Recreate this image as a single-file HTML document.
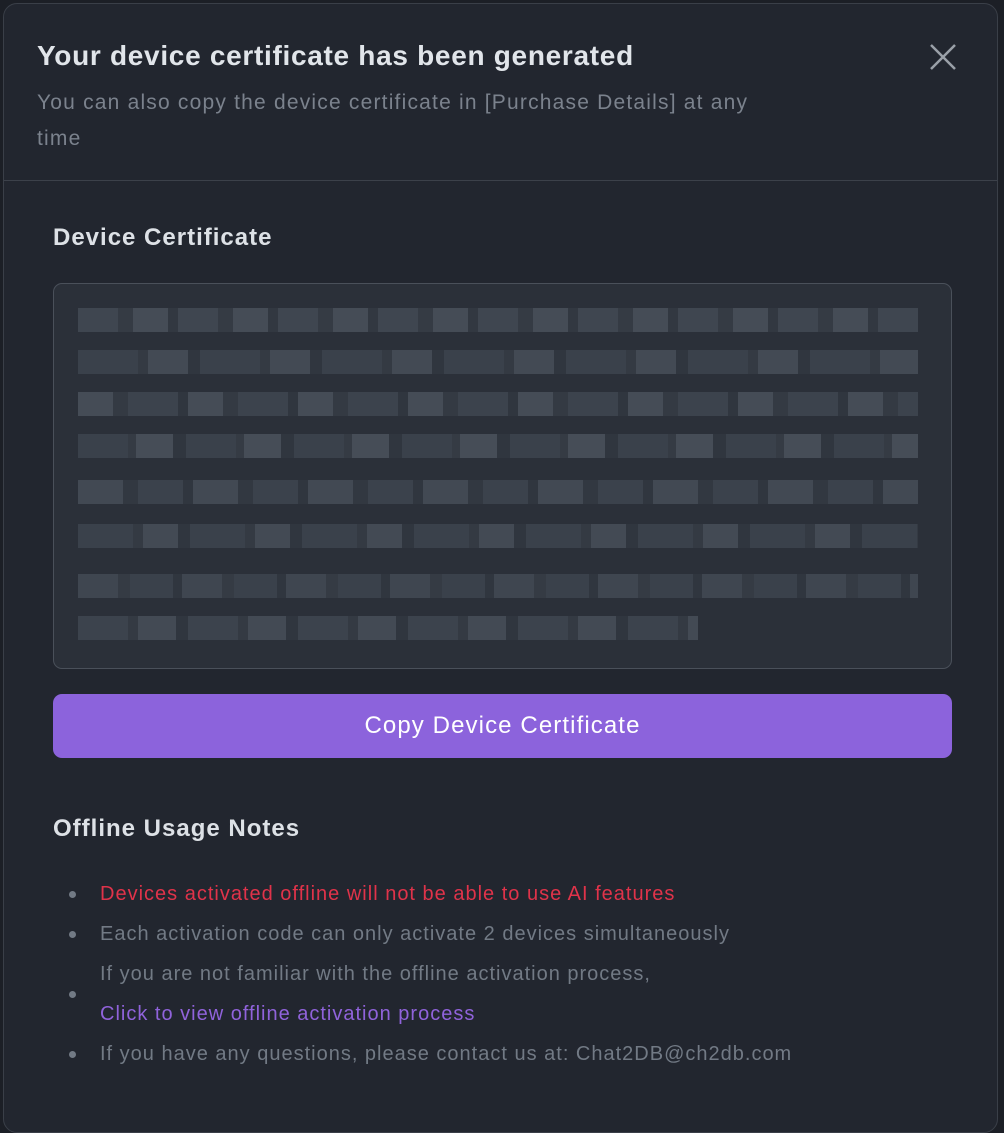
<!DOCTYPE html><html><head><style>
body{margin:0;width:1004px;height:1122px;background:#1c1f26;font-family:"Liberation Sans",sans-serif;overflow:hidden;position:relative}
.m{position:absolute;left:3px;top:3px;width:995px;height:1130px;background:#22262f;border:1px solid #3a3f48;border-radius:14px;box-sizing:border-box}
.t{position:absolute;left:33px;top:36px;font-size:28px;font-weight:600;color:#e1e5ea;letter-spacing:0.7px}
.s{position:absolute;left:33px;top:81px;width:740px;font-size:21px;line-height:36px;color:#7b828d;letter-spacing:1.2px}
.hr{position:absolute;left:0;right:0;top:176px;height:1px;background:#3c414a}
.h{position:absolute;left:49px;font-size:24px;font-weight:600;color:#dde1e6;letter-spacing:1px}
.box{position:absolute;left:49px;top:279px;width:899px;height:386px;background:#2b3039;border:1.5px solid #4a505a;border-radius:9px;box-sizing:border-box;overflow:hidden}
.row{position:absolute;left:24px;height:24px}
.btn{position:absolute;left:49px;top:690px;width:899px;height:64px;background:#8c63dc;border-radius:9px;color:#fff;font-size:24px;text-align:center;line-height:64px;letter-spacing:1.1px}
ul{position:absolute;left:48px;top:870px;margin:0;padding:0;list-style:none;font-size:20px;line-height:40px;color:#727a85;letter-spacing:1px}
li{position:relative;padding-left:48px}
li:before{content:"";position:absolute;left:17px;top:50%;width:7px;height:7px;margin-top:-3px;border-radius:50%;background:#727a85}
.x{position:absolute;left:924px;top:38px}
</style></head><body>
<div class="m">
<div class="t">Your device certificate has been generated</div>
<div class="s">You can also copy the device certificate in [Purchase Details] at any time</div>
<svg class="x" width="30" height="30" viewBox="0 0 30 30"><path d="M3 3L27 27M27 3L3 27" stroke="#9aa0a8" stroke-width="2.5"/></svg>
<div class="hr"></div>
<div class="h" style="top:220px">Device Certificate</div>
<div class="box">
<div class="row" style="top:24px;width:840px;background:repeating-linear-gradient(90deg,#3f4650 0 40px,#353b44 40px 55px,#454c56 55px 90px,#323841 90px 100px)"></div>
<div class="row" style="top:66px;width:840px;background:repeating-linear-gradient(90deg,#3a414b 0 60px,#343a43 60px 70px,#434a54 70px 110px,#30363f 110px 122px)"></div>
<div class="row" style="top:108px;width:840px;background:repeating-linear-gradient(90deg,#454c56 0 35px,#343a43 35px 50px,#3c434d 50px 100px,#30363f 100px 110px)"></div>
<div class="row" style="top:150px;width:840px;background:repeating-linear-gradient(90deg,#3a414b 0 50px,#353b44 50px 58px,#464d57 58px 95px,#30363f 95px 108px)"></div>
<div class="row" style="top:196px;width:840px;background:repeating-linear-gradient(90deg,#424953 0 45px,#323841 45px 60px,#3b424c 60px 105px,#30363f 105px 115px)"></div>
<div class="row" style="top:240px;width:840px;background:repeating-linear-gradient(90deg,#3a414b 0 55px,#343a43 55px 65px,#434a54 65px 100px,#30363f 100px 112px)"></div>
<div class="row" style="top:290px;width:840px;background:repeating-linear-gradient(90deg,#3f4650 0 40px,#353b44 40px 52px,#3a414b 52px 95px,#30363f 95px 104px)"></div>
<div class="row" style="top:332px;width:620px;background:repeating-linear-gradient(90deg,#3c434d 0 50px,#343a43 50px 60px,#434a54 60px 98px,#30363f 98px 110px)"></div>
</div>
<div class="btn">Copy Device Certificate</div>
<div class="h" style="top:811px">Offline Usage Notes</div>
<ul>
<li style="color:#e0334a">Devices activated offline will not be able to use AI features</li>
<li>Each activation code can only activate 2 devices simultaneously</li>
<li>If you are not familiar with the offline activation process,<br><span style="color:#9063db">Click to view offline activation process</span></li>
<li>If you have any questions, please contact us at: Chat2DB@ch2db.com</li>
</ul>
</div>
</body></html>
